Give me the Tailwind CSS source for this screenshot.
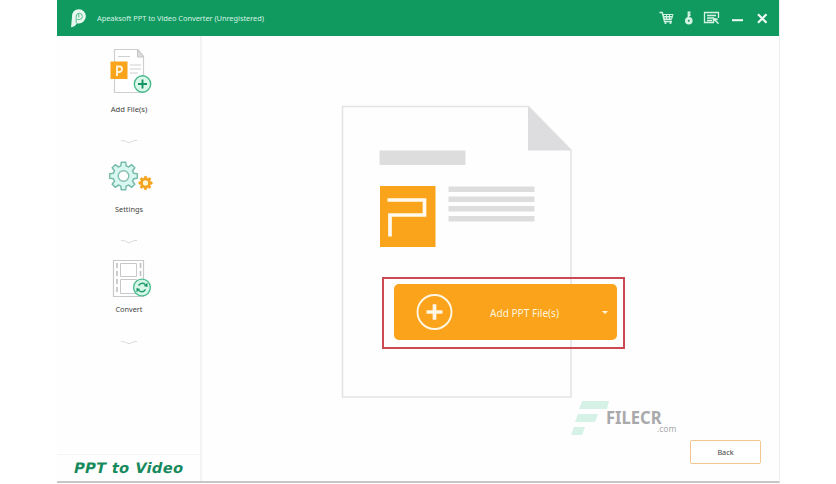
<!DOCTYPE html>
<html lang="en">
<head>
<meta charset="utf-8">
<title>Apeaksoft PPT to Video Converter</title>
<script src="https://cdn.jsdelivr.net/npm/@tailwindcss/browser@4"></script>
</head>
<body class="bg-white w-[836px] h-[484px] overflow-hidden font-['Noto_Sans','Open_Sans',sans-serif] text-[#444]">
<svg class="hidden">
  <defs>
    <path id="gear" d="M-2.7-10.1L-2.2-13.8H2.2L2.7-10.1L5.2-9.05L8.2-11.3L11.3-8.2L9.05-5.2L10.1-2.7L13.8-2.2V2.2L10.1 2.7L9.05 5.2L11.3 8.2L8.2 11.3L5.2 9.05L2.7 10.1L2.2 13.8H-2.2L-2.7 10.1L-5.2 9.05L-8.2 11.3L-11.3 8.2L-9.05 5.2L-10.1 2.7L-13.8 2.2V-2.2L-10.1-2.7L-9.05-5.2L-11.3-8.2L-8.2-11.3L-5.2-9.05Z"/>
  </defs>
</svg>
<div class="ml-[57px] w-[723px] h-[483px] flex flex-col border-r border-b-2 border-r-[#ededed] border-b-[#c6c6c6] bg-[#fefefe]">
  <header class="h-9 shrink-0 bg-[#109a60] flex items-center text-[#d5f2e3]">
    <svg class="ml-[13px]" width="17" height="20" viewBox="0 0 17 20">
      <path d="M2 9Q2 1.200 9 1.200A7.100 7.100 0 1 1 8.500 15.400H6.500Q5.500 18.500 1 19.200Z" fill="#e6f8ee"/>
      <path d="M6.200 15V8a3.100 3.100 0 1 1 3.100 3.500H7.300M8.800 6v3.500" fill="none" stroke="#55b98a" stroke-width="1"/>
    </svg>
    <span class="ml-[10px] text-[7.450px] leading-3 whitespace-nowrap tracking-[-0.060px]">Apeaksoft PPT to Video Converter (Unregistered)</span>
    <svg class="ml-auto mr-[10px]" width="110" height="18" viewBox="0 0 110 18" fill="none" stroke="#d5f2e3">
      <path d="M.5 3.500H3.300L5.500 12.500H13" stroke-width="1.300"/>
      <path d="M4 5.500H14L12.500 10.500H5.500ZM5 7.500H13.500M5 9H13M7.500 5.500V10M10.500 5.500V10" stroke-width="1"/>
      <circle cx="6.500" cy="14" r="1.100" fill="#d5f2e3" stroke="none"/><circle cx="11.500" cy="14" r="1.100" fill="#d5f2e3" stroke="none"/>
      <path d="M29.500 2.500V9M29.700 3.500H31.500M29.700 6H31.500" stroke-width="1.800"/>
      <circle cx="29.800" cy="11.800" r="2.400" stroke-width="2.800"/>
      <path d="M55 13.500H45.500V3.500H59.500V9M48 6.500H57M48 9H55M48 11.500H53" stroke-width="1.300"/>
      <path d="M54.500 9.500L59.500 14.800M54.500 9.500V13.500M54.500 9.500L58.800 10.500" stroke-width="1.500"/>
      <path d="M73 11.200H84" stroke-width="2" stroke="#f0fbf5"/>
      <path d="M99 5.300L107.500 13.800M107.500 5.300L99 13.800" stroke-width="2.200" stroke="#f0fbf5"/>
    </svg>
  </header>
  <div class="flex flex-1 min-h-0">
    <aside class="w-[145px] shrink-0 border-r-2 border-[#f3f3f3] flex flex-col items-center">
      <div class="flex h-[101px] w-full flex-col items-center pt-3">
        <svg class="ml-[5px]" width="48" height="48" viewBox="0 0 48 48" fill="none">
          <path d="M7.500 1.500H31L36.500 8.500V44.500H7.500Z" fill="#fff" stroke="#cfcfd2" stroke-width="1.200"/>
          <path d="M30.500 1.500V9H37Z" fill="#ddd" stroke="#c4c4c7"/>
          <path d="M11 8.500H23M23 17H34M23 21H34M23 25H31" stroke="#cfcfd2" stroke-width="1.200"/>
          <rect x="3.500" y="13.500" width="17" height="17.500" fill="#f9a41b"/>
          <path d="M10 28V18.500H12.500Q15 18.500 15 21T12.500 24H10" stroke="#fff4d8" stroke-width="1.900"/>
          <circle cx="35.500" cy="36" r="8.200" fill="#d9f7eb" stroke="#48b98b" stroke-width="1.400"/>
          <path d="M35.500 31.500V40.500M31 36H40" stroke="#169365" stroke-width="1.900"/>
        </svg>
        <span class="mt-[7px] text-[7.600px] leading-3 ml-px">Add File(s)</span>
      </div>
      <svg class="shrink-0 ml-px" width="16" height="8" viewBox="0 0 16 8" fill="none" stroke="#dcdcdc"><path d="M0 3.500Q3 3 6 5Q8 6.500 10 5Q13 3 16 3.500"/></svg>
      <div class="flex h-[92px] w-full flex-col items-center pt-[9px]">
        <svg class="ml-[7px]" width="48" height="40" viewBox="0 0 48 40" fill="none">
          <g transform="translate(15.500 22)"><use href="#gear" fill="#d7f7ef" stroke="#78bbaa" stroke-width="1.500" stroke-linejoin="round"/><circle r="5.300" fill="#fff" stroke="#85beb1" stroke-width="1.400"/></g>
          <g transform="translate(37.500 29) scale(.48)"><use href="#gear" fill="#f5a31f" stroke="#f5a31f" stroke-width="1.500" stroke-linejoin="round"/><circle r="5.500" fill="#fff6d8"/></g>
        </svg>
        <span class="mt-[9px] text-[7.300px] leading-3 ml-px">Settings</span>
      </div>
      <svg class="shrink-0 ml-px" width="16" height="8" viewBox="0 0 16 8" fill="none" stroke="#dcdcdc"><path d="M0 3.500Q3 3 6 5Q8 6.500 10 5Q13 3 16 3.500"/></svg>
      <div class="flex h-[93px] w-full flex-col items-center pt-[9px]">
        <svg class="ml-[5px]" width="48" height="44" viewBox="0 0 48 44" fill="none">
          <path d="M6.500 6.500H36.500V42.500H6.500Z" fill="#fff" stroke="#c8c8cb" stroke-width="1.200"/>
          <path d="M13.500 9.500H29.500V22.500H13.500ZM13.500 25.500H29.500V39.500H13.500Z" stroke="#c8c8cb"/>
          <path d="M10 9V41M33.500 9V41" stroke="#c0c0c3" stroke-width="1.600" stroke-dasharray="5 3"/>
          <circle cx="35" cy="33.500" r="8.400" fill="#d5f6e9" stroke="#52bd92" stroke-width="1.400"/>
          <path d="M31.500 31.500Q34.500 27.500 38.500 30.500M38.500 35.500Q35.500 39.500 31.500 36.500" stroke="#229b6c" stroke-width="1.400"/>
          <path d="M40.500 28.800V33L36.800 32ZM29.500 38.200V34L33.200 35Z" fill="#169365"/>
        </svg>
        <span class="mt-[5px] text-[7.300px] leading-3 ml-px">Convert</span>
      </div>
      <svg class="shrink-0 ml-px" width="16" height="8" viewBox="0 0 16 8" fill="none" stroke="#dcdcdc"><path d="M0 3.500Q3 3 6 5Q8 6.500 10 5Q13 3 16 3.500"/></svg>
      <div class="mt-auto h-[27px] w-full border-t border-[#f1f5f3] flex items-center justify-center">
        <span class="inline-block -skew-x-12 font-['DejaVu_Sans',sans-serif] font-bold text-[14.500px] leading-4 text-[#168a5c] whitespace-nowrap tracking-[0.450px]">PPT to Video</span>
      </div>
    </aside>
    <main class="relative flex-1">
      <svg class="absolute left-[139px] top-[69px]" width="233" height="294" viewBox="0 0 233 294" fill="none">
        <path d="M1.500 1.500H187.500L230 45V292H1.500Z" stroke="#e3e3e4" stroke-width="1.500"/>
        <path d="M187 1.500V45.500H230.500Z" fill="#dddddf"/>
        <path d="M38.500 45.500H124.500V60H38.500ZM107.500 81.500H193.500V87H107.500ZM107.500 91.500H193.500V97H107.500ZM107.500 101H193.500V106.500H107.500ZM107.500 111H193.500V116.500H107.500Z" fill="#ddddde"/>
        <rect x="39" y="81" width="55.500" height="61" fill="#f9a41b"/>
        <path d="M46.500 95H83.500V110H49V131.500" stroke="#fffaf0" stroke-width="3.700"/>
      </svg>
      <div class="absolute left-[180px] top-[241px] w-[243px] h-[72px] border-2 border-[#cb4a52] pl-[10px] pt-[5px]">
        <div class="w-[223px] h-[56px] rounded-[5px] bg-[#faa31b] flex items-center pl-[22px] pr-[9px]">
          <svg width="37" height="37" viewBox="0 0 37 37" fill="none" stroke="#fff7e4"><circle cx="18.500" cy="18" r="17" stroke-width="1.900"/><path d="M18.500 10.250V25.750M10.500 18H26.500" stroke-width="3.700"/></svg>
          <span class="ml-[37px] mt-px text-[10.100px] leading-4 text-[#fff5df] whitespace-nowrap">Add PPT File(s)</span>
          <svg class="ml-auto" width="6" height="5" viewBox="0 0 6 5"><path d="M0 1H6L3 4Z" fill="#fff5df"/></svg>
        </div>
      </div>
      <div class="absolute left-[369px] top-[364px] flex">
        <svg width="40" height="36" viewBox="0 0 40 36" fill="#d6f1e6"><path d="M11 1H38L36 9H8ZM7 14H27L24 22H4ZM3 27H14L11 35H0Z"/></svg>
        <div class="-ml-[5px] pt-[10px] text-[#a9a9ab] whitespace-nowrap">
          <div class="font-bold text-[18px] leading-[14px] origin-left scale-x-[0.920]">FILECR</div>
          <div class="pl-[51px] text-[8.500px] leading-[10px]">.com</div>
        </div>
      </div>
      <button class="absolute right-[18px] bottom-[17px] w-[71px] h-6 rounded-[2px] border border-[#f0c58e] bg-white text-[7.300px] text-[#444]">Back</button>
    </main>
  </div>
</div>
</body>
</html>
